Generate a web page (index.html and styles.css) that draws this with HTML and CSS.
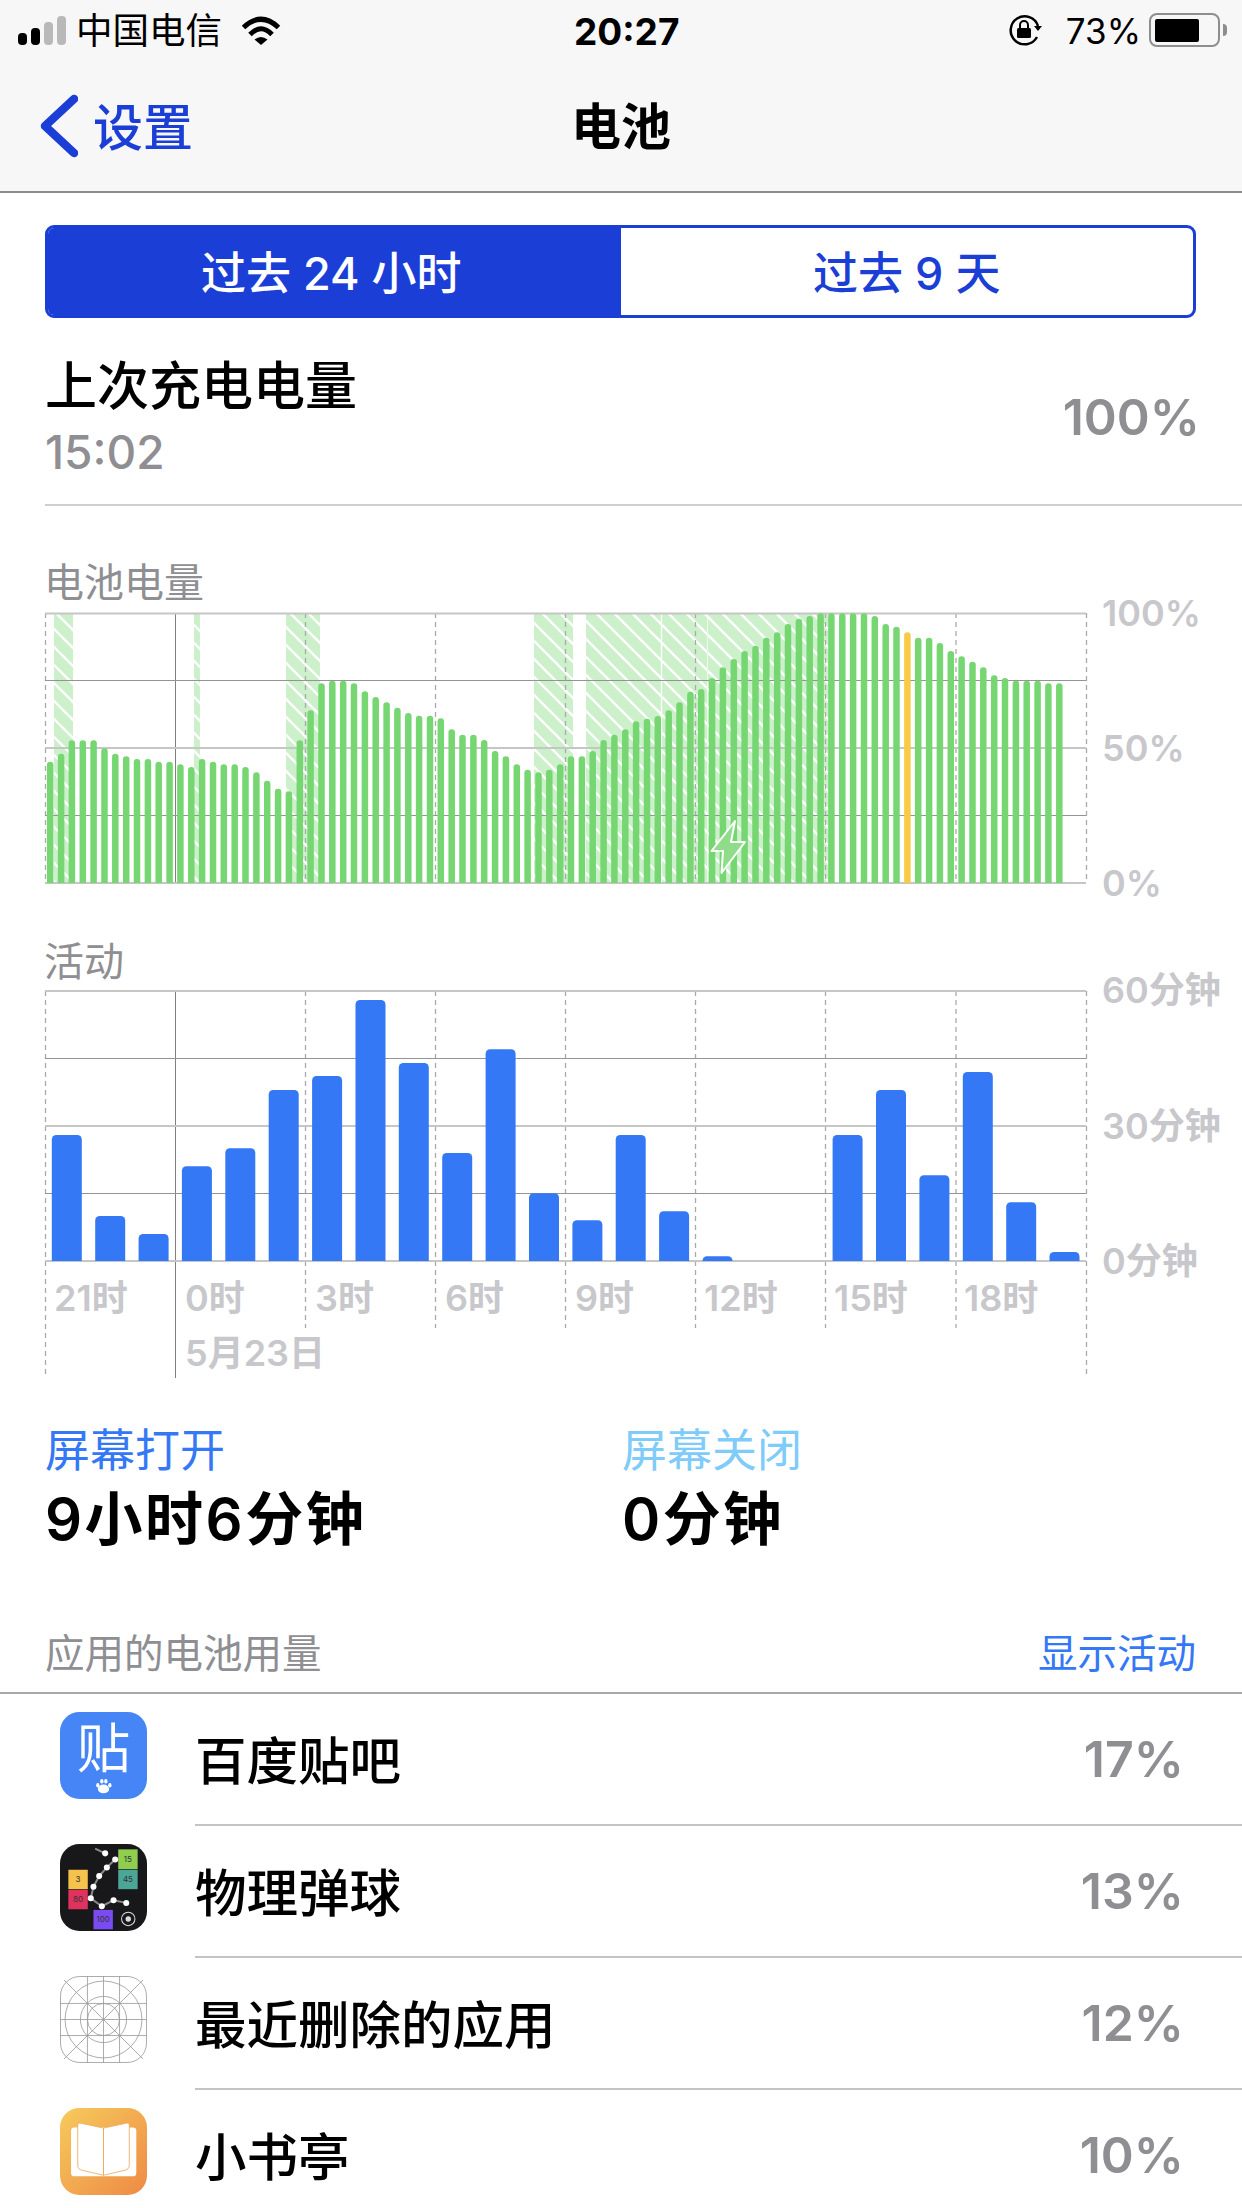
FILE: index.html
```html
<!DOCTYPE html>
<html lang="zh-CN">
<head>
  <meta charset="UTF-8">
  <meta name="viewport" content="width=device-width, initial-scale=1.0">
  <title>电池</title>
  <link rel="stylesheet" href="styles.css">
</head>
<body>
  <header class="top_bar">
    <div class="status">
      <div class="status_left">
        <div class="signal">
          <span class="signal_bar s1"></span>
          <span class="signal_bar s2"></span>
          <span class="signal_bar s3 off"></span>
          <span class="signal_bar s4 off"></span>
        </div>
        <span class="carrier">中国电信</span>
        <svg class="wifi" width="43" height="30" viewBox="0 0 43 30">
          <path d="M3.5 12.5Q21 -4 38.5 12.5M10 19.5Q21 8 32 19.5" fill="none" stroke="#000" stroke-width="5"/>
          <path d="M21 30L14.5 24.5Q21 19.5 27.5 24.5Z"/>
        </svg>
      </div>
      <div class="time">20:27</div>
      <div class="status_right">
        <svg class="lock" width="34" height="32" viewBox="0 0 34 32">
          <path d="M30 12A14 14 0 1 0 29 23" fill="none" stroke="#000" stroke-width="2.5"/>
          <path d="M26 12H34L30 17Z"/>
          <rect x="9" y="14" width="14" height="10" rx="1.5"/>
          <path d="M12 14V11A4 4 0 0 1 20 11V14" fill="none" stroke="#000" stroke-width="2"/>
        </svg>
        <span class="percent">73%</span>
        <div class="battery"><div class="battery_fill"></div></div>
        <div class="battery_nub"></div>
      </div>
    </div>
    <nav class="nav">
      <a class="back">
        <svg width="38" height="64" viewBox="0 0 38 64">
          <path d="M34 5L5 32L34 59" fill="none" stroke="#1b3fd6" stroke-width="8.5" stroke-linecap="round" stroke-linejoin="round"/>
        </svg>
        <span class="back_text">设置</span>
      </a>
      <h1 class="nav_title">电池</h1>
    </nav>
  </header>

  <main>
    <div class="segment">
      <div class="segment_item active">过去 24 小时</div>
      <div class="segment_item">过去 9 天</div>
    </div>

    <div class="last_charge">
      <div>
        <div class="last_title">上次充电电量</div>
        <div class="last_time">15:02</div>
      </div>
      <div class="last_value">100%</div>
    </div>

    <h2 class="chart_title">电池电量</h2>
    <svg class="chart level_chart" width="1242" height="300" viewBox="0 607 1242 300">
      <defs>
        <pattern id="hatch" width="18" height="18" patternUnits="userSpaceOnUse">
          <rect width="18" height="18" fill="#cbf0ca"/>
          <path d="M-3 -3L21 21M-3 15L3 21M15 -3L21 3" stroke="#fff" stroke-width="2.4"/>
        </pattern>
        <clipPath id="level_clip"><rect x="0" y="607" width="1242" height="277"/></clipPath>
      </defs>
      <g fill="url(#hatch)">
        <rect x="54" y="614" width="19" height="270"/>
        <rect x="194" y="614" width="6" height="270"/>
        <rect x="286" y="614" width="34" height="270"/>
        <rect x="534" y="614" width="39" height="270"/>
        <rect x="586" y="614" width="242" height="270"/>
      </g>
      <path d="M661.5 614V884" stroke="#fff" stroke-width="1.4"/>
      <path d="M707.5 614V884" stroke="#eefaee" stroke-width="1"/>
      <path class="dash_line" d="M45.5 614V884M305.5 614V884M435.5 614V884M565.5 614V884M695.5 614V884M825.5 614V884M956 614V884M1086.5 614V884"/>
      <path class="solid_line" d="M175.5 614V884"/>
      <path class="grid_dark" d="M45 681.5H1086M45 816.5H1086"/>
      <path class="grid_light" d="M45 614.5H1086M45 749H1086M45 884H1086"/>
      <g clip-path="url(#level_clip)">
        <path class="level_bars" d="M50.2 765.9V890M61.1 757.9V890M71.9 744.5V890M82.8 744.5V890M93.6 744.5V890M104.5 752.5V890M115.3 757.9V890M126.2 760.5V890M137 763.2V890M147.9 763.2V890M158.7 765.9V890M169.6 765.9V890M180.4 768.5V890M191.3 771.2V890M202.1 763.2V890M213 765.9V890M223.8 768.5V890M234.7 768.5V890M245.5 771.2V890M256.4 776.5V890M267.2 784.9V890M278.1 792.9V890M288.9 795.5V890M299.8 744.5V890M310.6 714.5V890M321.5 687.5V890M332.3 684.9V890M343.2 684.9V890M354 687.5V890M364.9 695.5V890M375.7 701.2V890M386.6 706.5V890M397.4 711.9V890M408.3 717.2V890M419.1 719.9V890M430 719.9V890M440.8 722.5V890M451.7 733.5V890M462.5 738.9V890M473.4 738.9V890M484.2 744.2V890M495.1 755.2V890M505.9 760.5V890M516.8 768.5V890M527.6 773.9V890M538.5 776.5V890M549.3 773.9V890M560.2 768.5V890M571 760.5V890M581.9 760.5V890M592.7 755.2V890M603.6 744.2V890M614.4 738.9V890M625.3 733.5V890M636.1 725.5V890M647 722.9V890M657.8 720.2V890M668.7 714.5V890M679.5 706.5V890M690.4 695.9V890M701.2 693.2V890M712.1 682.2V890M722.9 671.5V890M733.8 663.2V890M744.6 655.2V890M755.5 649.9V890M766.3 641.9V890M777.2 636.5V890M788 628.2V890M798.9 622.9V890M809.7 620.2V890M820.6 617.5V890M831.4 617.5V890M842.3 617.5V890M853.1 617.5V890M864 617.5V890M874.8 620.2V890M885.7 628.2V890M896.5 630.9V890M918.2 641.9V890M929.1 641.9V890M939.9 647.2V890M950.8 655.2V890M961.6 660.5V890M972.5 665.9V890M983.3 671.5V890M994.2 679.5V890M1005 682.2V890M1015.9 684.9V890M1026.7 684.9V890M1037.6 684.9V890M1048.4 687.5V890M1059.3 687.5V890"/>
        <path class="level_low" d="M907.4 636.5V890"/>
      </g>
      <path class="bolt" d="M735 822L711.5 852H723L721.5 874L745 843H731Z"/>
      <text class="axis" x="1102" y="626.5">100%</text>
      <text class="axis" x="1102" y="761.5">50%</text>
      <text class="axis" x="1102" y="896.5">0%</text>
    </svg>

    <h2 class="chart_title activity_title">活动</h2>
    <svg class="chart" width="1242" height="400" viewBox="0 984 1242 400">
      <defs>
        <clipPath id="activity_clip"><rect x="0" y="984" width="1242" height="278"/></clipPath>
      </defs>
      <path class="dash_line" d="M45.5 992V1379M1086.5 992V1379M305.5 992V1329M435.5 992V1329M565.5 992V1329M695.5 992V1329M825.5 992V1329M956 992V1329"/>
      <path class="solid_line" d="M175.5 992V1379"/>
      <path class="grid_dark" d="M45 1059.5H1086M45 1194.5H1086"/>
      <path class="grid_light" d="M45 992H1086M45 1127H1086M45 1262H1086"/>
      <g class="activity_bars" clip-path="url(#activity_clip)">
        <rect x="51.8" y="1136" width="30" height="136" rx="4.5"/>
        <rect x="95.2" y="1217" width="30" height="55" rx="4.5"/>
        <rect x="138.6" y="1235" width="30" height="37" rx="4.5"/>
        <rect x="181.9" y="1167.3" width="30" height="105" rx="4.5"/>
        <rect x="225.3" y="1149.3" width="30" height="123" rx="4.5"/>
        <rect x="268.7" y="1091" width="30" height="181" rx="4.5"/>
        <rect x="312.1" y="1077" width="30" height="195" rx="4.5"/>
        <rect x="355.5" y="1001" width="30" height="271" rx="4.5"/>
        <rect x="398.8" y="1064" width="30" height="208" rx="4.5"/>
        <rect x="442.2" y="1154" width="30" height="118" rx="4.5"/>
        <rect x="485.6" y="1050.3" width="30" height="222" rx="4.5"/>
        <rect x="529" y="1194.3" width="30" height="78" rx="4.5"/>
        <rect x="572.4" y="1221.3" width="30" height="51" rx="4.5"/>
        <rect x="615.7" y="1136" width="30" height="136" rx="4.5"/>
        <rect x="659.1" y="1212.3" width="30" height="60" rx="4.5"/>
        <rect x="702.5" y="1257.3" width="30" height="15" rx="4.5"/>
        <rect x="832.6" y="1136" width="30" height="136" rx="4.5"/>
        <rect x="876" y="1091" width="30" height="181" rx="4.5"/>
        <rect x="919.4" y="1176.3" width="30" height="96" rx="4.5"/>
        <rect x="962.8" y="1073" width="30" height="199" rx="4.5"/>
        <rect x="1006.2" y="1203.3" width="30" height="69" rx="4.5"/>
        <rect x="1049.5" y="1253" width="30" height="19" rx="4.5"/>
      </g>
      <text class="axis" x="1102" y="1004">60分钟</text>
      <text class="axis" x="1102" y="1140">30分钟</text>
      <text class="axis" x="1102" y="1275">0分钟</text>
      <text class="axis" x="54" y="1312">21时</text>
      <text class="axis" x="185" y="1312">0时</text>
      <text class="axis" x="315" y="1312">3时</text>
      <text class="axis" x="445" y="1312">6时</text>
      <text class="axis" x="575" y="1312">9时</text>
      <text class="axis" x="704" y="1312">12时</text>
      <text class="axis" x="834" y="1312">15时</text>
      <text class="axis" x="964" y="1312">18时</text>
      <text class="axis" x="185" y="1367">5月23日</text>
    </svg>

    <div class="screen_stats">
      <div>
        <div class="stat_label on">屏幕打开</div>
        <div class="stat_value">9小时6分钟</div>
      </div>
      <div>
        <div class="stat_label off">屏幕关闭</div>
        <div class="stat_value">0分钟</div>
      </div>
    </div>

    <div class="usage_head">
      <span class="usage_title">应用的电池用量</span>
      <span class="usage_link">显示活动</span>
    </div>

    <ul class="app_list">
      <li class="app_row">
        <svg class="app_icon" viewBox="0 0 260 260">
          <rect width="260" height="260" rx="58" fill="#4585f5"/>
          <text class="tieba_char" x="130" y="166" text-anchor="middle">贴</text>
          <g fill="#fff">
            <ellipse cx="130" cy="230" rx="17" ry="13"/>
            <ellipse cx="113" cy="219" rx="5" ry="7"/>
            <ellipse cx="125" cy="207" rx="5" ry="7"/>
            <ellipse cx="137" cy="207" rx="5" ry="7"/>
            <ellipse cx="149" cy="219" rx="5" ry="7"/>
          </g>
        </svg>
        <div class="app_body"><span class="app_name">百度贴吧</span><span class="app_percent">17%</span></div>
      </li>
      <li class="app_row">
        <svg class="app_icon" viewBox="0 0 260 260">
          <rect width="260" height="260" rx="58" fill="#18181a"/>
          <rect x="174" y="16" width="58" height="59" fill="#8fce4f"/>
          <rect x="174" y="77" width="58" height="58" fill="#4ba598"/>
          <rect x="25" y="77" width="58" height="58" fill="#f5c24c"/>
          <rect x="25" y="137" width="58" height="58" fill="#e0325f"/>
          <rect x="100" y="197" width="58" height="58" fill="#7a4bf0"/>
          <g class="block_num" text-anchor="middle">
            <text x="203" y="54">15</text>
            <text x="203" y="114">45</text>
            <text x="54" y="114">3</text>
            <text x="54" y="174">80</text>
            <text x="129" y="234">100</text>
          </g>
          <path d="M105 14L135 28M165 46L140 70L117 96L100 128L92 162L125 186M125 186L160 168L198 176" fill="none" stroke="#8b8b8b" stroke-width="6"/>
          <g fill="#fff">
            <circle cx="135" cy="28" r="9"/>
            <circle cx="165" cy="46" r="9"/>
            <circle cx="140" cy="70" r="9"/>
            <circle cx="117" cy="96" r="9"/>
            <circle cx="100" cy="128" r="9"/>
            <circle cx="92" cy="162" r="9"/>
            <circle cx="125" cy="186" r="9"/>
            <circle cx="160" cy="168" r="9"/>
            <circle cx="198" cy="176" r="9"/>
          </g>
          <circle cx="204" cy="224" r="20" fill="none" stroke="#ddd" stroke-width="3"/>
          <circle cx="204" cy="224" r="8" fill="#ddd"/>
        </svg>
        <div class="app_body"><span class="app_name">物理弹球</span><span class="app_percent">13%</span></div>
      </li>
      <li class="app_row">
        <svg class="app_icon" viewBox="0 0 260 260">
          <g fill="none" stroke="#9c9c9c" stroke-width="2.5">
            <rect x="1.5" y="1.5" width="257" height="257" rx="58"/>
            <path d="M82 1V259M130 1V259M178 1V259M1 82H259M1 130H259M1 178H259M12 12L248 248M248 12L12 248"/>
            <circle cx="130" cy="130" r="115"/>
            <circle cx="130" cy="130" r="69"/>
            <circle cx="130" cy="130" r="48"/>
          </g>
        </svg>
        <div class="app_body"><span class="app_name">最近删除的应用</span><span class="app_percent">12%</span></div>
      </li>
      <li class="app_row">
        <svg class="app_icon" viewBox="0 0 260 260">
          <defs>
            <linearGradient id="book_bg" x1="0" y1="0" x2="1" y2="1">
              <stop offset="0" stop-color="#f6cb5c"/>
              <stop offset="1" stop-color="#ee8a45"/>
            </linearGradient>
          </defs>
          <rect width="260" height="260" rx="58" fill="url(#book_bg)"/>
          <rect x="33" y="58" width="195" height="146" rx="10" fill="#fff"/>
          <path d="M53 50Q53 43 60 45L130 60V201L66 186Q53 183 53 172ZM207 50Q207 43 200 45L130 60V201L194 186Q207 183 207 172Z" fill="#fff" stroke="#f0a858" stroke-width="2.5"/>
        </svg>
        <div class="app_body"><span class="app_name">小书亭</span><span class="app_percent">10%</span></div>
      </li>
    </ul>
  </main>
</body>
</html>
```

FILE: styles.css
```css
*{
  margin: 0;
  padding: 0;
  box-sizing: border-box;
}

html, body{
  width: 1242px;
  height: 2208px;
  overflow: hidden;
}

body{
  background-color: #fff;
  color: #000;
  font-family: "Inter", "Noto Sans CJK SC", sans-serif;
}

.top_bar{
  background-color: #f7f7f7;
  border-bottom: 2px solid #8c8c8c;
}

.status{
  display: grid;
  grid-template-columns: 556px auto 1fr;
  align-items: center;
  height: 60px;
  padding-left: 18px;
}

.status_left{
  display: flex;
  align-items: center;
}

.signal{
  display: flex;
  align-items: flex-end;
  gap: 4px;
  height: 30px;
}

.signal_bar{
  display: block;
  width: 9px;
  border-radius: 4px;
  background-color: #000;
}

.signal_bar.off{
  background-color: #b9b9b9;
}

.s1{ height: 12px; }
.s2{ height: 17px; }
.s3{ height: 23px; }
.s4{ height: 29px; }

.carrier{
  margin-left: 10px;
  padding-top: 2px;
  font-size: 36.5px;
  line-height: 40px;
}

.wifi{
  margin-left: 18px;
}

.time{
  padding-top: 3px;
  font-size: 37px;
  font-weight: 700;
  line-height: 40px;
}

.status_right{
  display: flex;
  align-items: center;
  justify-content: flex-end;
  padding-right: 15px;
}

.percent{
  margin: 0 8px 0 24px;
  padding-top: 2px;
  font-size: 35px;
  line-height: 40px;
}

.battery{
  width: 71px;
  height: 34px;
  padding: 3.5px;
  border: 2.5px solid #8e8e8e;
  border-radius: 8px;
}

.battery_fill{
  width: 44px;
  height: 100%;
  border-radius: 2px;
  background-color: #000;
}

.battery_nub{
  width: 4px;
  height: 12px;
  margin-left: 3px;
  border-radius: 0 6px 6px 0;
  background-color: #8e8e8e;
}

.nav{
  display: grid;
  grid-template-columns: 1fr auto 1fr;
  align-items: center;
  height: 131px;
}

.back{
  display: flex;
  align-items: center;
  gap: 15px;
  padding-left: 40px;
  color: #1b3fd6;
}

.back_text{
  padding-bottom: 4px;
  font-size: 50px;
  font-weight: 500;
}

.nav_title{
  padding-bottom: 6px;
  font-size: 50px;
  font-weight: 700;
}

.segment{
  display: grid;
  grid-template-columns: 1fr 1fr;
  width: 1151px;
  height: 93px;
  margin: 32px 0 0 45px;
  border: 3px solid #1b3fd6;
  border-radius: 9px;
  overflow: hidden;
}

.segment_item{
  display: flex;
  align-items: center;
  justify-content: center;
  padding-bottom: 2px;
  color: #1b3fd6;
  font-size: 45px;
  font-weight: 500;
}

.segment_item.active{
  padding-right: 6px;
  background-color: #1b3fd6;
  color: #fff;
}

.last_charge{
  display: flex;
  align-items: center;
  justify-content: space-between;
  height: 188px;
  margin-left: 45px;
  padding: 12px 42px 0 0;
  border-bottom: 2px solid #cfcfcf;
}

.last_title{
  font-size: 52px;
  font-weight: 500;
  line-height: 54px;
}

.last_time{
  margin-top: 16px;
  color: #8e8e93;
  font-size: 46px;
  font-weight: 500;
  line-height: 44px;
}

.last_value{
  color: #8e8e93;
  font-size: 50px;
  font-weight: 600;
}

.chart_title{
  margin: 54px 0 0 44px;
  color: #8e8e93;
  font-size: 40px;
  font-weight: 400;
  line-height: 46px;
}

.activity_title{
  margin-top: 34px;
  line-height: 43px;
}

.chart{
  display: block;
  overflow: visible;
}

.dash_line{
  fill: none;
  stroke: #aaa;
  stroke-width: 1.3;
  stroke-dasharray: 5 4;
}

.solid_line{
  fill: none;
  stroke: #808080;
  stroke-width: 1;
}

.grid_dark{
  fill: none;
  stroke: #949494;
  stroke-width: 1.2;
}

.grid_light{
  fill: none;
  stroke: #c6c6c6;
  stroke-width: 2;
}

.level_bars{
  fill: none;
  stroke: #76d672;
  stroke-width: 6.5;
  stroke-linecap: round;
}

.level_low{
  fill: none;
  stroke: #f6cb45;
  stroke-width: 6.5;
  stroke-linecap: round;
}

.bolt{
  fill: #8fdc8b;
  stroke: #fff;
  stroke-width: 2;
  stroke-linejoin: round;
}

.activity_bars{
  fill: #3478f6;
}

.axis{
  fill: #c7c7cc;
  font-size: 36px;
  font-weight: 600;
}

.screen_stats{
  display: grid;
  grid-template-columns: 577px 1fr;
  margin: 41px 0 0 45px;
}

.stat_label{
  font-size: 45px;
  line-height: 54px;
}

.stat_label.on{
  color: #3478f6;
}

.stat_label.off{
  color: #7fcbf9;
}

.stat_value{
  margin-top: 10px;
  font-size: 58px;
  font-weight: 600;
  letter-spacing: 2.5px;
  line-height: 62px;
}

.usage_head{
  display: flex;
  align-items: center;
  justify-content: space-between;
  margin-top: 81px;
  padding: 0 46px 15px 45px;
  border-bottom: 2px solid #a8a8a8;
  font-size: 39.5px;
  line-height: 46px;
}

.usage_title{
  color: #8e8e93;
}

.usage_link{
  color: #3478f6;
}

.app_list{
  list-style: none;
}

.app_row{
  display: flex;
  height: 132px;
  padding-left: 60px;
}

.app_icon{
  flex: none;
  width: 87px;
  height: 87px;
  margin: 18px 48px 0 0;
}

.app_body{
  display: flex;
  flex: 1;
  align-items: center;
  justify-content: space-between;
  padding-right: 58px;
  border-bottom: 2px solid #c4c4c4;
}

.app_name{
  padding-bottom: 3px;
  font-size: 51.5px;
  font-weight: 500;
}

.app_percent{
  color: #8e8e93;
  font-size: 50px;
  font-weight: 600;
}

.tieba_char{
  fill: #fff;
  font-size: 160px;
  font-weight: 400;
}

.block_num{
  fill: #333;
  font-size: 24px;
}
```
